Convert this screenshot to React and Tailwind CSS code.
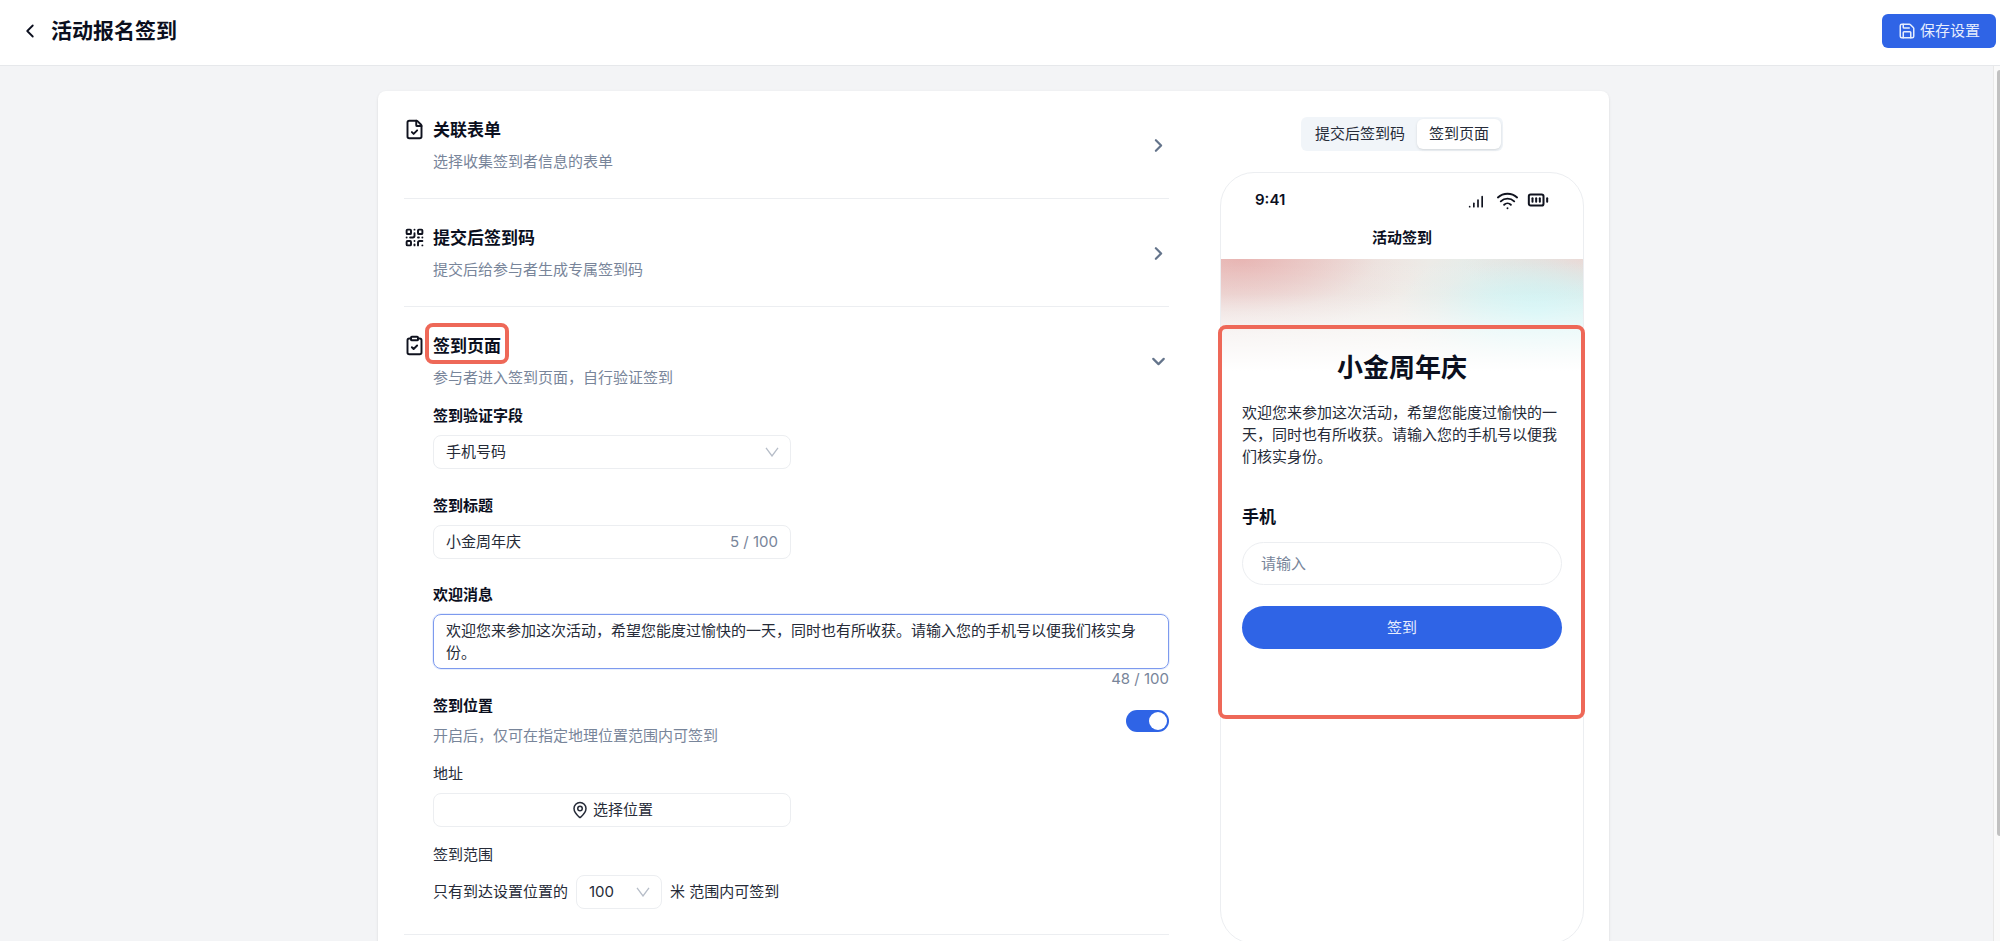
import { useState } from "react";
import {
  BatteryFull,
  ChevronDown,
  ChevronLeft,
  ChevronRight,
  ClipboardCheck,
  FileCheck,
  MapPin,
  QrCode,
  Save,
  SignalHigh,
  Wifi,
} from "lucide-react";
import clsx from "clsx";

const MAX_LENGTH = 100;

/* ---------------- SMALL PARTS ---------------- */
function Section({ icon: Icon, title, desc, open, marked, children }) {
  const Arrow = open ? ChevronDown : ChevronRight;

  return (
    <section className="border-b border-[#eceef1] pt-[26px] pb-[25px]">
      <button
        type="button"
        aria-expanded={!!open}
        className="flex w-full items-center gap-2 text-left"
      >
        <Icon
          size={21}
          strokeWidth={2.2}
          className="mt-0.5 shrink-0 self-start text-[#10131f]"
        />
        <span className="flex-1">
          <span className="relative inline-block align-top text-[17px] leading-[26px] font-semibold">
            {title}
            {marked && (
              <span className="absolute -inset-x-2 -top-2.5 -bottom-[5px] rounded-lg border-4 border-[#ee6858]" />
            )}
          </span>
          <span className="mt-2 block leading-[22px] text-[#78859a]">{desc}</span>
        </span>
        <Arrow size={21} strokeWidth={2.5} className="shrink-0 text-[#64748b]" />
      </button>
      {children && <div className="pl-[29px]">{children}</div>}
    </section>
  );
}

function SelectBox({ id, value, options, className, label }) {
  return (
    <div className={clsx("relative", className)}>
      <select
        id={id}
        aria-label={label}
        defaultValue={value}
        className="h-[34px] w-full appearance-none rounded-lg border border-[#eceef1] bg-white px-3 text-[#262b38] outline-none"
      >
        {options.map((o) => (
          <option key={o}>{o}</option>
        ))}
      </select>
      <svg
        viewBox="0 0 14 10"
        className="pointer-events-none absolute top-3 right-3 h-2.5 w-3.5"
        fill="none"
        stroke="#b6bdc8"
        strokeWidth="1.3"
      >
        <path d="M1 0.8 7 9 13 0.8" />
      </svg>
    </div>
  );
}

/* ---------------- PHONE PREVIEW ---------------- */
function PhonePreview({ title, message }) {
  return (
    <div className="relative h-[772px] w-[364px] rounded-[34px] border border-[#eceef1] bg-white">
      <div className="flex h-[54px] items-center justify-between pr-[34px] pl-[34px]">
        <span className="font-semibold">9:41</span>
        <span className="flex items-center gap-2 text-[#10131f]">
          <SignalHigh size={20} />
          <Wifi size={23} />
          <BatteryFull size={22} strokeWidth={2.2} />
        </span>
      </div>
      <p className="pb-2.5 text-center leading-[22px] font-semibold">活动签到</p>

      <div className="bg-[linear-gradient(to_bottom,rgba(255,255,255,0)_0px,rgba(255,255,255,0.1)_35px,rgba(255,255,255,0.6)_70px,#fff_112px),radial-gradient(140px_80px_at_87%_56px,rgba(200,244,245,0.95)_0%,rgba(200,244,245,0.6)_40%,rgba(200,244,245,0.18)_72%,rgba(200,244,245,0)_100%),radial-gradient(120px_48px_at_100%_0px,#f0d5d1_0%,rgba(240,213,209,0.5)_50%,rgba(240,213,209,0)_100%),radial-gradient(190px_75px_at_5%_0px,#e8b5b3_0%,rgba(232,181,179,0.55)_40%,rgba(232,181,179,0.15)_72%,rgba(232,181,179,0)_100%),linear-gradient(to_right,#ece2df,#eeebe7_50%,#e4ebe8)] px-[21px] pt-[91px]">
        <h2 className="text-center text-[26px] leading-9 font-semibold">{title}</h2>
        <p className="mt-4 leading-[22px] text-[#262b38]">{message}</p>
        <label
          htmlFor="phone"
          className="mt-[37px] block text-[17px] leading-6 font-semibold"
        >
          手机
        </label>
        <input
          id="phone"
          placeholder="请输入"
          className="mt-[13px] block h-[43px] w-full rounded-full border border-[#eceef1] bg-white px-[18px] outline-none placeholder:text-[#78859a]"
        />
        <button
          type="button"
          className="mt-[21px] block h-[43px] w-full rounded-full bg-[#2f64e6] text-[#e6edfd]"
        >
          签到
        </button>
      </div>

      {/* highlight around the check-in form */}
      <div className="pointer-events-none absolute -right-0.5 -left-[3px] top-[152px] h-[394px] rounded-lg border-4 border-[#ee6858]" />
    </div>
  );
}

/* ---------------- PAGE ---------------- */
export default function App() {
  const [title, setTitle] = useState("小金周年庆");
  const [message, setMessage] = useState(
    "欢迎您来参加这次活动，希望您能度过愉快的一天，同时也有所收获。请输入您的手机号以便我们核实身份。"
  );
  const [locationOn, setLocationOn] = useState(true);

  return (
    <div
      lang="zh-CN"
      className="flex h-screen flex-col overflow-hidden bg-[#f3f4f6] font-['Inter','Noto_Sans_CJK_SC',sans-serif] text-[15px] leading-[22px] text-[#0b0f1e]"
    >
      <header className="flex h-[66px] shrink-0 items-center border-b border-[#e6e8eb] bg-white pr-1 pb-[3px] pl-[19px]">
        <button type="button" aria-label="返回">
          <ChevronLeft size={22} />
        </button>
        <h1 className="ml-2.5 flex-1 text-[21px] leading-8 font-semibold">活动报名签到</h1>
        <button
          type="button"
          className="flex h-[34px] items-center gap-1 rounded-md bg-[#2f64e6] px-4 text-[#e6edfd]"
        >
          <Save size={18} />
          保存设置
        </button>
      </header>

      <div className="flex min-h-0 flex-1">
        <main className="flex-1 overflow-hidden pt-[25px] pr-1.5">
          <div className="mx-auto flex max-w-[1231px] gap-[51px] rounded-lg bg-white pr-[25px] pb-6 pl-[26px] shadow-sm">
            <div className="flex-1">
              <Section icon={FileCheck} title="关联表单" desc="选择收集签到者信息的表单" />
              <Section
                icon={QrCode}
                title="提交后签到码"
                desc="提交后给参与者生成专属签到码"
              />
              <Section
                icon={ClipboardCheck}
                title="签到页面"
                desc="参与者进入签到页面，自行验证签到"
                open
                marked
              >
                <label htmlFor="field" className="mt-[15px] block leading-6 font-semibold">
                  签到验证字段
                </label>
                <SelectBox
                  id="field"
                  value="手机号码"
                  options={["手机号码"]}
                  className="mt-[7px] max-w-[358px]"
                />

                <label htmlFor="title" className="mt-[25px] block leading-6 font-semibold">
                  签到标题
                </label>
                <div className="mt-[7px] flex h-[34px] max-w-[358px] items-center rounded-lg border border-[#eceef1] px-3">
                  <input
                    id="title"
                    value={title}
                    maxLength={MAX_LENGTH}
                    onChange={(e) => setTitle(e.target.value)}
                    className="min-w-0 flex-1 text-[#262b38] outline-none"
                  />
                  <span className="text-[#78859a]">
                    {title.length} / {MAX_LENGTH}
                  </span>
                </div>

                <label htmlFor="message" className="mt-6 block leading-6 font-semibold">
                  欢迎消息
                </label>
                <textarea
                  id="message"
                  value={message}
                  maxLength={MAX_LENGTH}
                  onChange={(e) => setMessage(e.target.value)}
                  className="mt-[7px] block h-[55px] w-full resize-none overflow-hidden rounded-lg border border-[#7d9aee] px-3 py-[5px] leading-[22px] text-[#262b38] ring-1 ring-[#e8effd] outline-none"
                />
                <p className="text-right leading-5 text-[#78859a]">
                  {message.length} / {MAX_LENGTH}
                </p>

                <div className="mt-[5px] flex items-center justify-between">
                  <div>
                    <label htmlFor="location" className="block leading-6 font-semibold">
                      签到位置
                    </label>
                    <p className="mt-[7px] text-[#78859a]">
                      开启后，仅可在指定地理位置范围内可签到
                    </p>
                  </div>
                  <input
                    id="location"
                    type="checkbox"
                    role="switch"
                    checked={locationOn}
                    onChange={(e) => setLocationOn(e.target.checked)}
                    className="flex h-[22px] w-[43px] appearance-none items-center rounded-full bg-gray-300 px-0.5 before:size-[18px] before:rounded-full before:bg-white checked:justify-end checked:bg-[#2f64e6]"
                  />
                </div>

                <p className="mt-4 text-[#262b38]">地址</p>
                <button
                  type="button"
                  className="mt-2 flex h-[34px] w-full max-w-[358px] items-center justify-center gap-1 rounded-lg border border-[#eceef1] text-[#262b38]"
                >
                  <MapPin size={18} />
                  选择位置
                </button>

                <p className="mt-[17px] text-[#262b38]">签到范围</p>
                <div className="mt-[9px] flex items-center text-[#262b38]">
                  <span>只有到达设置位置的</span>
                  <SelectBox
                    label="签到范围"
                    value="100"
                    options={["100", "200", "500"]}
                    className="mx-2 w-[86px]"
                  />
                  <span>米 范围内可签到</span>
                </div>
              </Section>
            </div>

            <aside className="flex flex-col items-center pt-[26px]">
              <div role="tablist" className="flex h-[34px] items-center rounded-md bg-[#f1f5f9] p-0.5">
                <button role="tab" type="button" aria-selected={false} className="px-3 text-[#262b38]">
                  提交后签到码
                </button>
                <button
                  role="tab"
                  type="button"
                  aria-selected={true}
                  className="h-[30px] rounded-md bg-white px-3 text-[#262b38] shadow-sm"
                >
                  签到页面
                </button>
              </div>
              <div className="mt-[21px]">
                <PhonePreview title={title} message={message} />
              </div>
            </aside>
          </div>
        </main>

        {/* scrollbar */}
        <div className="flex w-[7px] justify-end border-l border-[#e8e8e8] bg-[#fafafa] pt-1">
          <div className="h-[88%] w-[3px] rounded-l-full bg-[#c1c1c1]" />
        </div>
      </div>
    </div>
  );
}
